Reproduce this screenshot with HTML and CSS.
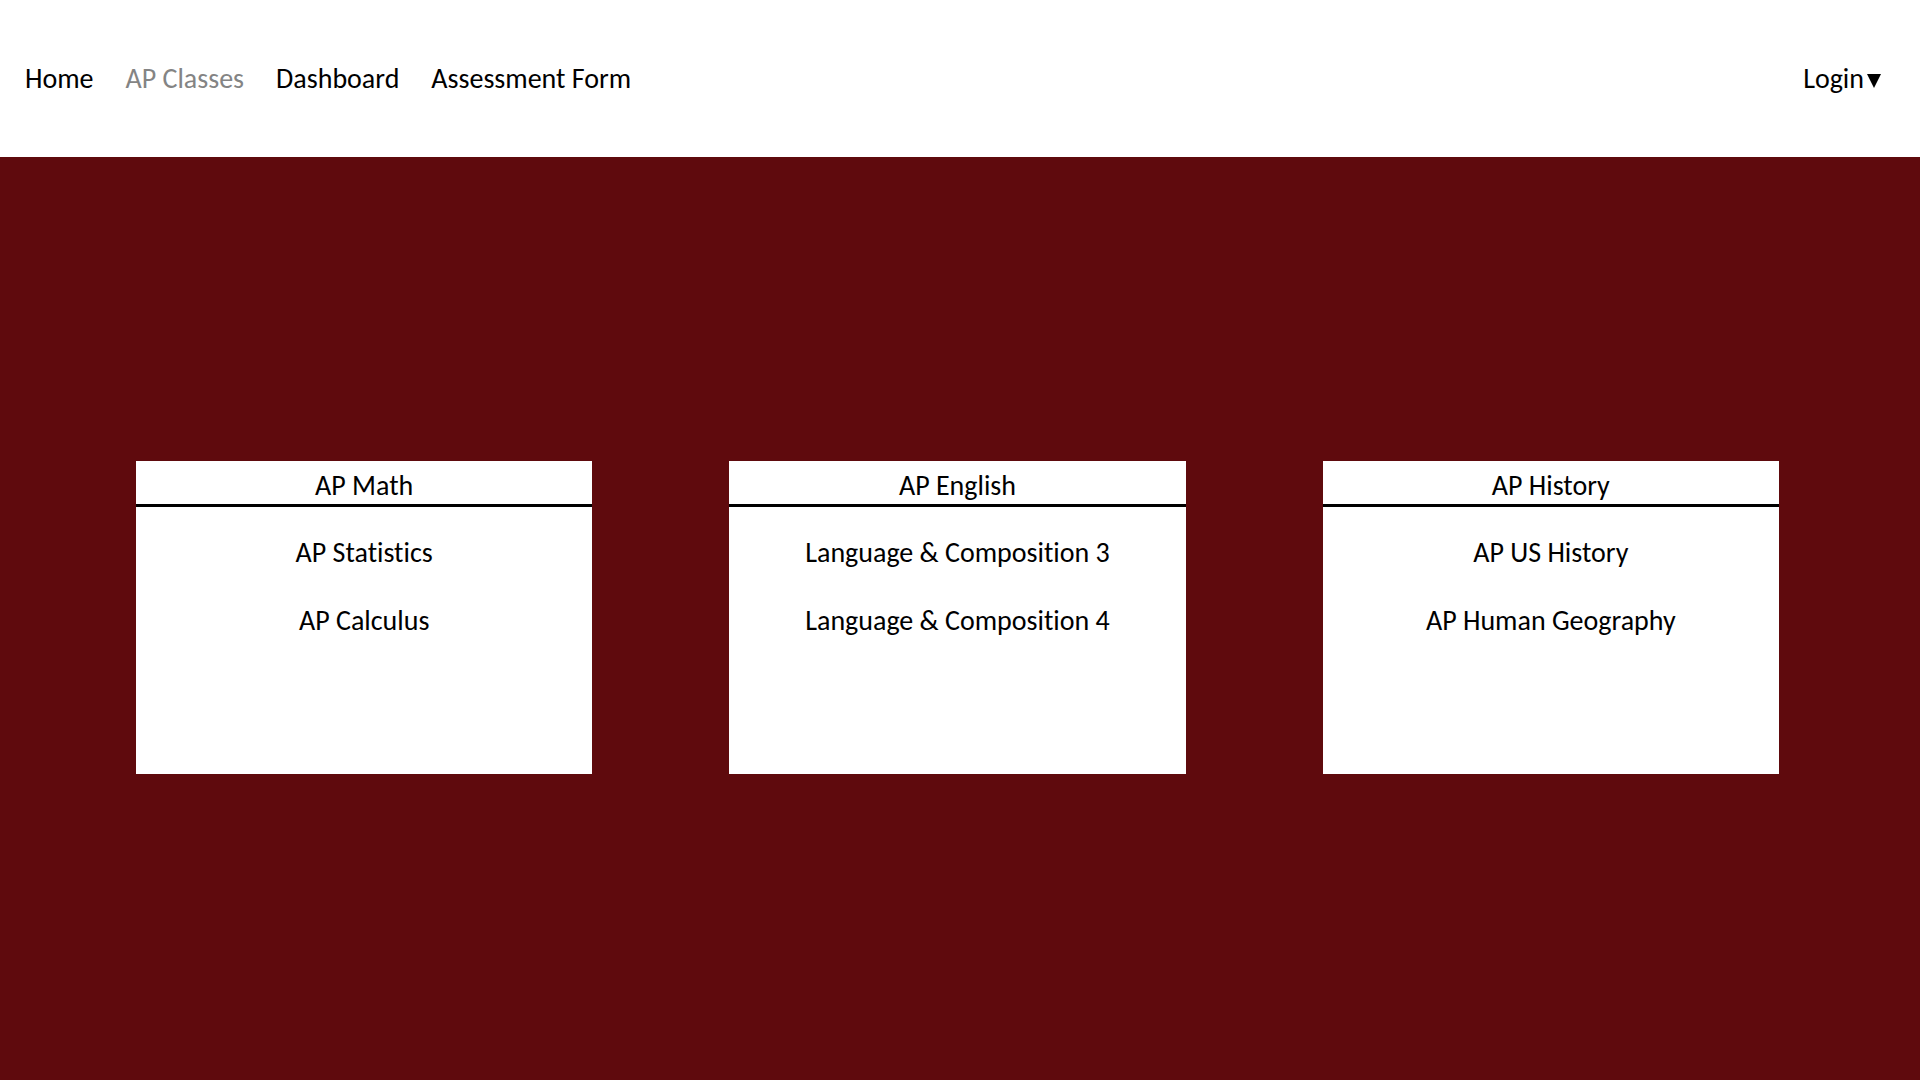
FILE: index.html
```html
<!DOCTYPE html>
<html lang="en">
<head>
  <meta charset="utf-8">
  <meta name="viewport" content="width=device-width, initial-scale=1">
  <title>AP Classes</title>
  <link rel="stylesheet" href="styles.css">
</head>
<body>
  <header class="site-header">
    <nav class="nav" aria-label="Main">
      <a class="nav-link" href="#">Home</a>
      <a class="nav-link nav-link-current" href="#" aria-current="page">AP Classes</a>
      <a class="nav-link" href="#">Dashboard</a>
      <a class="nav-link" href="#">Assessment Form</a>
    </nav>
    <button class="login" type="button" aria-haspopup="true">
      Login
      <svg class="login-arrow" viewBox="0 0 14 14" aria-hidden="true"><path d="M0 0H14L7 14Z"/></svg>
    </button>
  </header>
  <main class="page">
    <div class="cards">
      <section class="card">
        <h2 class="card-title">AP Math</h2>
        <ul class="class-list">
          <li><a class="class-link" href="#">AP Statistics</a></li>
          <li><a class="class-link" href="#">AP Calculus</a></li>
        </ul>
      </section>
      <section class="card">
        <h2 class="card-title">AP English</h2>
        <ul class="class-list">
          <li><a class="class-link" href="#">Language &amp; Composition 3</a></li>
          <li><a class="class-link" href="#">Language &amp; Composition 4</a></li>
        </ul>
      </section>
      <section class="card">
        <h2 class="card-title">AP History</h2>
        <ul class="class-list">
          <li><a class="class-link" href="#">AP US History</a></li>
          <li><a class="class-link" href="#">AP Human Geography</a></li>
        </ul>
      </section>
    </div>
  </main>
</body>
</html>
```
FILE: styles.css
```css
* {
  box-sizing: border-box;
}

body {
  display: flex;
  flex-direction: column;
  min-height: 100vh;
  margin: 0;
  background: #5f0a0d;
  color: #000;
  font-family: Carlito, Calibri, Lato, sans-serif;
  font-size: 28px;
  font-variant-ligatures: none;
  line-height: 34px;
}

.site-header {
  display: flex;
  align-items: center;
  justify-content: space-between;
  padding: 62px 39px 61px 25px;
  background: #fff;
}

.nav {
  display: flex;
  flex-wrap: wrap;
  gap: 32px;
}

.nav-link,
.class-link {
  color: inherit;
  text-decoration: none;
}

.nav-link-current {
  color: #848484;
}

.login {
  display: flex;
  align-items: baseline;
  gap: 3px;
  padding: 0;
  border: 0;
  background: none;
  color: inherit;
  font: inherit;
  cursor: pointer;
}

.login-arrow {
  width: 14px;
  height: 14px;
}

.page {
  display: flex;
  flex: 1;
  align-items: center;
  padding: 40px 141px 42px 136px;
}

.cards {
  display: grid;
  flex: 1;
  grid-template-columns: repeat(3, 1fr);
  gap: 137px;
}

.card {
  min-height: 313px;
  background: #fff;
  text-align: center;
}

.card-title {
  margin: 0;
  padding: 8px 0 1px;
  border-bottom: 3px solid #000;
  font-size: inherit;
  font-weight: 400;
}

.class-list {
  display: grid;
  gap: 34px;
  margin: 0;
  padding: 29px 0;
  list-style: none;
}
```
